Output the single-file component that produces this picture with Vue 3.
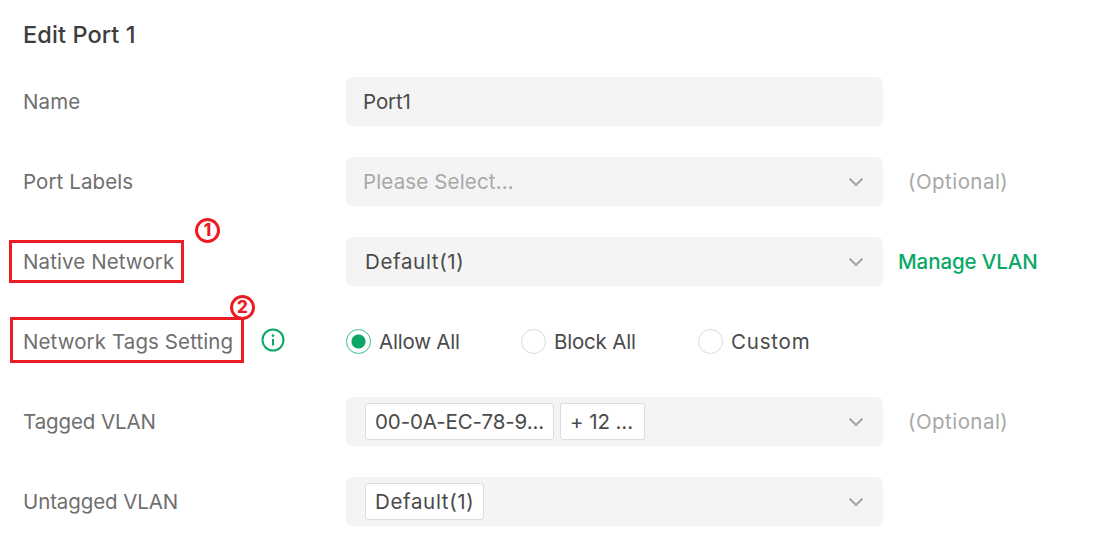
<script setup>
const optionsRadio = [
  { label: 'Allow All', checked: true, width: '175px', cls: 'tight' },
  { label: 'Block All', checked: false, width: '177px', cls: 'tight' },
  { label: 'Custom', checked: false, width: 'auto', cls: 'wide' }
]
</script>

<template>
  <div class="page">
    <h1 class="title">Edit Port 1</h1>

    <div class="row">
      <div class="label">Name</div>
      <div class="field"><span class="value">Port1</span></div>
    </div>

    <div class="row">
      <div class="label">Port Labels</div>
      <div class="field">
        <span class="placeholder">Please Select...</span>
        <svg class="chevron" viewBox="0 0 16 10"><path d="M1.5 1.5 8 8l6.5-6.5" /></svg>
      </div>
      <span class="hint">(Optional)</span>
    </div>

    <div class="row">
      <div class="label">
        Native Network
        <span class="red-box box-native"></span>
        <span class="badge badge-native">1</span>
      </div>
      <div class="field">
        <span class="value default-value">Default(1)</span>
        <svg class="chevron" viewBox="0 0 16 10"><path d="M1.5 1.5 8 8l6.5-6.5" /></svg>
      </div>
      <a class="link">Manage VLAN</a>
    </div>

    <div class="row">
      <div class="label">
        Network Tags Setting
        <span class="red-box box-tags"></span>
        <span class="badge badge-tags">2</span>
        <svg class="info" viewBox="0 0 24 24">
          <circle cx="12" cy="12" r="10.5" />
          <path d="M12 11v6.5" />
          <circle class="dot" cx="12" cy="7.6" r="1.3" />
        </svg>
      </div>
      <div class="radios">
        <label v-for="o in optionsRadio" :key="o.label" class="radio" :style="{ width: o.width }">
          <span class="circle" :class="{ on: o.checked }"></span>
          <span :class="o.cls">{{ o.label }}</span>
        </label>
      </div>
    </div>

    <div class="row">
      <div class="label narrow">Tagged VLAN</div>
      <div class="field tags">
        <span class="tag">00-0A-EC-78-9...</span>
        <span class="tag tag-more">+ 12 ...</span>
        <svg class="chevron" viewBox="0 0 16 10"><path d="M1.5 1.5 8 8l6.5-6.5" /></svg>
      </div>
      <span class="hint">(Optional)</span>
    </div>

    <div class="row">
      <div class="label narrow">Untagged VLAN</div>
      <div class="field tags">
        <span class="tag default-tag">Default(1)</span>
        <svg class="chevron" viewBox="0 0 16 10"><path d="M1.5 1.5 8 8l6.5-6.5" /></svg>
      </div>
    </div>
  </div>
</template>

<style>
html, body { background: #fff; }
</style>

<style scoped>
.page {
  width: 1095px;
  height: 556px;
  overflow: hidden;
  box-sizing: border-box;
  padding: 20px 0 0 23px;
  font-family: Inter, "Liberation Sans", sans-serif;
  font-size: 20.5px;
  color: #4a4a4a;
  letter-spacing: -0.1px;
}

.title {
  margin: 0 0 27px;
  height: 30px;
  line-height: 30px;
  font-size: 23.5px;
  font-weight: 500;
  color: #3d3d3d;
  letter-spacing: 0.1px;
}

.row {
  display: flex;
  align-items: center;
  height: 49px;
  margin-bottom: 31px;
}

.label {
  position: relative;
  width: 323px;
  flex: none;
  color: #6f6f6f;
  letter-spacing: 0.1px;
}

.label.narrow { letter-spacing: -0.1px; }

.field {
  display: flex;
  align-items: center;
  width: 537px;
  height: 49px;
  box-sizing: border-box;
  padding: 0 19px 0 17px;
  background: #f4f4f4;
  border-radius: 6px;
  flex: none;
}

.value { color: #4a4a4a; }

.default-value {
  margin-left: 2px;
  letter-spacing: 0.65px;
}

.default-tag { letter-spacing: 0.65px; }

.placeholder {
  color: #a8a8a8;
  letter-spacing: 0.15px;
}

.chevron {
  width: 16px;
  height: 10px;
  margin-left: auto;
  fill: none;
  stroke: #a3a3a3;
  stroke-width: 2;
}

.hint {
  margin-left: 25px;
  color: #a8a8a8;
  letter-spacing: 0.45px;
}

.link {
  margin-left: 15px;
  color: #0aa866;
  font-weight: 500;
}

.radios {
  display: flex;
  align-items: center;
}

.radio {
  display: flex;
  align-items: center;
  gap: 8px;
  box-sizing: border-box;
}

.radio .tight { letter-spacing: -0.2px; }
.radio .wide { letter-spacing: 0.8px; }

.circle {
  width: 25px;
  height: 25px;
  box-sizing: border-box;
  border: 1.5px solid #dcdcdc;
  border-radius: 50%;
  background: #fff;
}

.circle.on {
  border-color: #3fbd8a;
  background: radial-gradient(circle, #0aa866 0 6.5px, #fff 7.5px);
}

.tags { padding-left: 19px; gap: 6px; }

.tag {
  display: flex;
  align-items: center;
  height: 37px;
  box-sizing: border-box;
  padding: 0 9px;
  background: #fff;
  border: 1.5px solid #dcdcdc;
  border-radius: 3px;
  color: #4a4a4a;
  white-space: nowrap;
}

.tag-more { width: 85px; }

.red-box {
  position: absolute;
  box-sizing: border-box;
  border: 3px solid #ed1c24;
}

.box-native { left: -14px; top: -9px; width: 175px; height: 43px; }
.box-tags { left: -13px; top: -12px; width: 234px; height: 46px; }

.badge {
  position: absolute;
  width: 25px;
  height: 25px;
  box-sizing: border-box;
  border: 3px solid #ed1c24;
  border-radius: 50%;
  background: #fff;
  color: #ed1c24;
  font-size: 17px;
  font-weight: 800;
  line-height: 19px;
  text-align: center;
  letter-spacing: 0;
}

.badge-native { left: 172px; top: -31px; }
.badge-tags { left: 207px; top: -34px; }

.info {
  position: absolute;
  left: 238px;
  top: -1px;
  width: 24px;
  height: 24px;
  fill: none;
  stroke: #0aa866;
  stroke-width: 2;
}

.info .dot {
  fill: #0aa866;
  stroke: none;
}
</style>
